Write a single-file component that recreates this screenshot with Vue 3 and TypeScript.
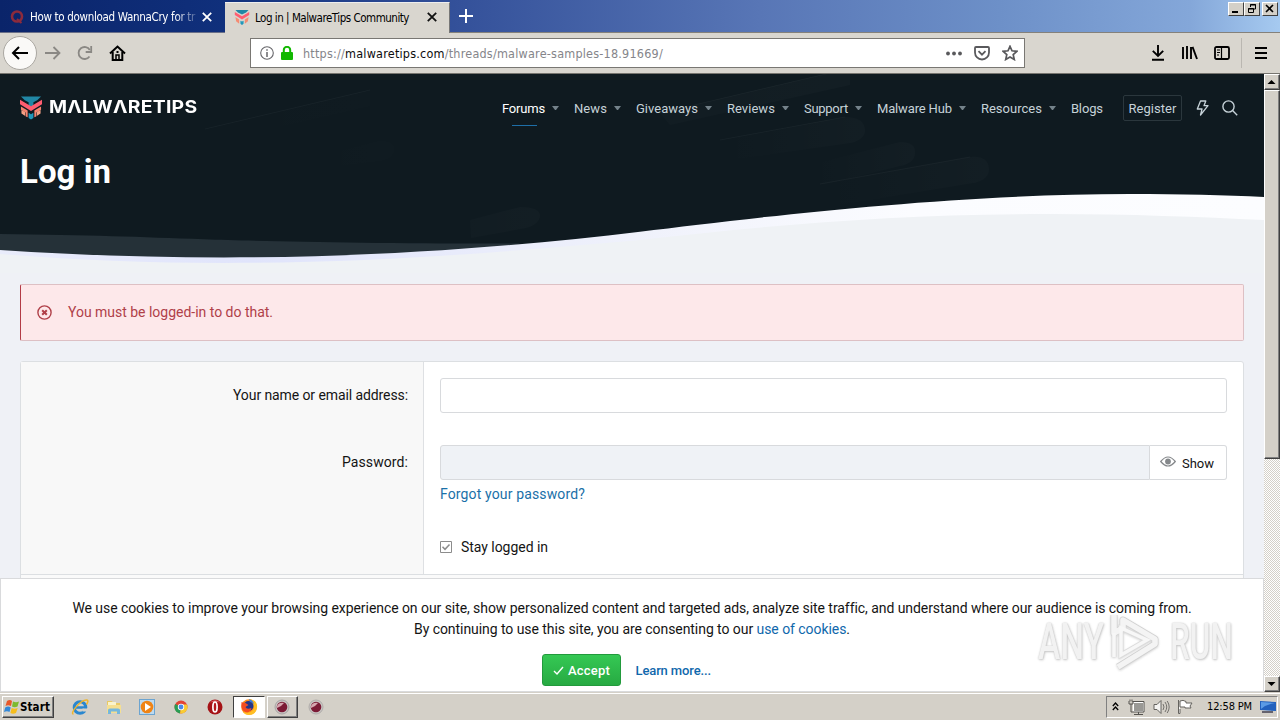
<script setup lang="ts">
import { ref, type Directive } from 'vue'

interface NavItem { label: string; width: number; menu: boolean; active?: boolean }

const nav: NavItem[] = [
  { label: 'Forums', width: 43, menu: true, active: true },
  { label: 'News', width: 33, menu: true },
  { label: 'Giveaways', width: 62, menu: true },
  { label: 'Reviews', width: 48, menu: true },
  { label: 'Support', width: 44, menu: true },
  { label: 'Malware Hub', width: 75, menu: true },
  { label: 'Resources', width: 61, menu: true },
  { label: 'Blogs', width: 32, menu: false },
]
const login = ref('')
const password = ref('')

// Tracks a label out so that it spans the given number of pixels.
const vFit: Directive<HTMLElement, number> = {
  mounted(el, binding) {
    const count = (el.textContent ?? '').length
    const natural = el.getBoundingClientRect().width
    if (count > 0) el.style.letterSpacing = `${(binding.value - natural) / count}px`
  },
}
</script>

<template>
  <div class="screen">
    <header class="titlebar">
      <div class="tab idle">
        <svg class="fav" width="16" height="16" viewBox="0 0 16 16"><circle cx="8" cy="7.500" r="5" fill="none" stroke="#8c2b3c" stroke-width="2.600"/><path d="M8 10l4.500 4" stroke="#8c2b3c" stroke-width="2"/></svg>
        <div class="tab-clip"><span v-fit="165" class="tab-text">How to download WannaCry for tr</span></div>
        <svg class="close" width="10" height="10" viewBox="0 0 10 10"><path d="M.8.8l8.400 8.400M9.200.8L.8 9.200" stroke="#fff" stroke-width="1.800"/></svg>
      </div>
      <div class="tab current">
        <svg class="fav" width="14" height="15" viewBox="0 0 23 24"><path d="M1 0h21l-4 4-6.500 3L5 4z" fill="#2187a5"/><path d="M0 3l11.500 7L23 3v5l-11.500 7L0 8z" fill="#ff5d70"/><path d="M1 11l6 4v7l-5-4zM22 11l-6 4v7l5-4z" fill="#f58b72"/><path d="M9 17l2.500 1.500L14 17v5l-2.500 2L9 22z" fill="#2198bb"/></svg>
        <div class="tab-clip"><span v-fit="154" class="tab-text">Log in | MalwareTips Community</span></div>
        <svg class="close" width="10" height="10" viewBox="0 0 10 10"><path d="M.8.8l8.400 8.400M9.200.8L.8 9.200" stroke="#111" stroke-width="1.800"/></svg>
      </div>
      <svg class="plus" width="14" height="14" viewBox="0 0 14 14"><path d="M7 0v14M0 7h14" stroke="#fff" stroke-width="2"/></svg>
      <div class="win-buttons">
        <i><svg width="14" height="12" viewBox="0 0 14 12"><path d="M3 9h6" stroke="#000" stroke-width="2"/></svg></i>
        <i><svg width="14" height="12" viewBox="0 0 14 12"><path d="M5.500 4V1.500h5v4.500H8.500M5 2h6M3.500 5.500h5v4h-5zM3 6h6" fill="none" stroke="#000"/></svg></i>
        <i class="x"><svg width="14" height="12" viewBox="0 0 14 12"><path d="M3 2l7 7M10 2L3 9" stroke="#000" stroke-width="1.600"/></svg></i>
      </div>
    </header>

    <div class="toolbar">
      <div class="back"><svg width="18" height="14" viewBox="0 0 18 14"><path d="M17 7H2M8 1L2 7l6 6" fill="none" stroke="#000" stroke-width="2"/></svg></div>
      <svg class="fwd" width="16" height="14" viewBox="0 0 16 14"><path d="M0 7h14M8.500 1l6 6-6 6" fill="none" stroke="#8a8884" stroke-width="1.800"/></svg>
      <svg class="reload" width="16" height="16" viewBox="0 0 16 16"><path d="M12.500 11.500A6 6 0 1 1 12.800 5" fill="none" stroke="#8a8884" stroke-width="1.800"/><path d="M14.200 1v6H8.700" fill="none" stroke="#8a8884" stroke-width="1.800"/></svg>
      <svg class="home" width="17" height="16" viewBox="0 0 17 16"><path d="M1 8.500l7.500-7 7.500 7" fill="none" stroke="#000" stroke-width="2"/><path d="M3.700 7v8h9.600V7" fill="none" stroke="#000" stroke-width="2"/><path d="M7 15v-5h3v5" fill="none" stroke="#000" stroke-width="1.500"/><path d="M7.500 6h2v2h-2z"/></svg>
      <div class="urlbar">
        <svg class="info" width="14" height="14" viewBox="0 0 14 14"><circle cx="7" cy="7" r="6.300" fill="none" stroke="#66666a" stroke-width="1.100"/><path d="M7 6v5M7 3.200v1.600" stroke="#66666a" stroke-width="1.500"/></svg>
        <svg class="lock" width="12" height="14" viewBox="0 0 12 14"><path d="M2.800 7V4a3.200 3.200 0 0 1 6.400 0v3" fill="none" stroke="#12b800" stroke-width="2"/><rect y="6" width="12" height="8" rx="1" fill="#12b800"/></svg>
        <span v-fit="360" class="url">https://<b>malwaretips.com</b>/threads/malware-samples-18.91669/</span>
        <svg class="dots" width="16" height="5" viewBox="0 0 16 5"><g fill="#59595c"><circle cx="2" cy="2.500" r="1.900"/><circle cx="8" cy="2.500" r="1.900"/><circle cx="14" cy="2.500" r="1.900"/></g></svg>
        <svg class="pocket" width="16" height="15" viewBox="0 0 16 15"><path d="M2 1h12q1 0 1 1v4.500a7 7 0 0 1-14 0V2q0-1 1-1z" fill="none" stroke="#59595c" stroke-width="1.800"/><path d="M4.500 5.200L8 8.700l3.500-3.500" fill="none" stroke="#59595c" stroke-width="1.800"/></svg>
        <svg class="star" width="16" height="16" viewBox="0 0 16 16"><path d="M8 1.300l2 4.500 4.900.5-3.700 3.300 1.100 4.900L8 12l-4.300 2.500 1.100-4.900L1.100 6.300 6 5.800z" fill="none" stroke="#59595c" stroke-width="1.700"/></svg>
      </div>
      <svg class="download" width="14" height="16" viewBox="0 0 14 16"><path d="M7 0v10.500M1.800 5.800L7 11l5.200-5.200M1 14.800h12" fill="none" stroke="#000" stroke-width="1.900"/></svg>
      <svg class="library" width="16" height="14" viewBox="0 0 16 14"><path d="M1 1v12M5 0v13M9 1v12M10.500.8L15 13" fill="none" stroke="#000" stroke-width="1.900"/></svg>
      <svg class="sidebar" width="16" height="14" viewBox="0 0 16 14"><rect x="1" y="1" width="14" height="12" rx="1.500" fill="none" stroke="#000" stroke-width="1.800"/><path d="M7.500 1v12M3 4h3M3 6.500h3M3 9h2" stroke="#000" stroke-width="1.200"/></svg>
      <i class="divider"></i>
      <svg class="menu" width="12" height="12" viewBox="0 0 12 12"><path d="M0 1h12M0 6h12M0 11h12" stroke="#000" stroke-width="2"/></svg>
    </div>

    <div class="viewport">
      <main class="page">
        <section class="hero">
          <svg class="backdrop" width="1264" height="200" viewBox="0 73 1264 200">
            <defs>
              <linearGradient id="crest" x1="0" x2="1"><stop offset="0" stop-color="#e9ecfb"/><stop offset=".2" stop-color="#e0e4fb"/><stop offset=".5" stop-color="#eff1fb"/><stop offset=".72" stop-color="#fbfcff"/><stop offset="1" stop-color="#fcfdff"/></linearGradient>
              <linearGradient id="streak" x1="0" x2="1"><stop offset="0" stop-color="#fff" stop-opacity="0"/><stop offset="1" stop-color="#fff" stop-opacity=".018"/></linearGradient>
            </defs>
            <rect y="73" width="1264" height="200" fill="#0f1a20"/>
            <g fill="url(#streak)">
              <path d="M205 129L370 90v16L215 142zM660 113L830 73h20v12L670 125z"/>
              <path d="M720 140l125-23q20 0 20 14-1 9-15 12l-112 16z"/>
              <path d="M810 165l90-23q16 0 15 11 0 10-15 13l-90 22z"/>
              <path d="M820 184l150-27q18-2 19 12 0 11-16 14l-140 23z"/>
              <path d="M315 157l64-16q16 0 15 9-1 9-15 11l-55 7zM470 220l50-13q19 0 20 8 0 9-14 13l-55 10z"/>
            </g>
            <g stroke="#fff" stroke-opacity=".035" fill="none"><path d="M205 129L370 90M660 113L830 73M720 140l125-23M820 184l150-27"/></g>
            <path d="M0 234C90 235 140 237 204 239.300S400 244 520 243.500L470 262H0z" fill="#253138"/>
            <path d="M0 250C75 255 150 257.500 224 257.500C380 257.500 520 246 640 231.700C760 217 950 194 1130 194C1180 194 1225 195 1264 197V273H0z" fill="url(#crest)"/>
            <path d="M0 254C75 260 150 263 224 263C380 263 500 252 640 240C780 224 900 214 1050 214C1130 214 1200 217 1264 220V273H0z" fill="#eff2f5"/>
          </svg>
          <div class="nav">
            <svg class="mark" width="22" height="24" viewBox="0 0 23 24"><path d="M1 0h21l-4 4-4 2v4h-5V6L5 4z" fill="#2187a5"/><path d="M0 3.500l11.500 6.800L23 3.500v4.600l-11.500 7L0 8.100z" fill="#ff5d70"/><path d="M1 10.500l7 4v7.300l-2-1v-4l-5-3zM22 10.500l-7 4v7.300l2-1v-4l5-3z" fill="#f5826f"/><path d="M1.500 14l4 2.300v4l-4-2.500zM21.500 14l-4 2.300v4l4-2.500z" fill="#f5a083"/><path d="M9 17l2.500 1.500L14 17v5.500L11.500 24 9 22.500z" fill="#2198bb"/></svg>
            <div class="logo"><span v-fit="148">MΛLWΛRETIPS</span></div>
            <nav>
              <a v-for="item in nav" :key="item.label" :class="{ active: item.active }">
                <span v-fit="item.width">{{ item.label }}</span>
                <i v-if="item.menu" class="caret"></i>
              </a>
            </nav>
            <a class="register"><span v-fit="48">Register</span></a>
            <svg class="bolt" width="13" height="16" viewBox="0 0 13 16"><path d="M4.500 1h5.300L8 5.700h4L4.500 15 6 9H1.300z" fill="none" stroke="#c6d2d8" stroke-width="1.300" stroke-linejoin="round"/></svg>
            <svg class="search" width="16" height="16" viewBox="0 0 16 16"><circle cx="6.500" cy="6.500" r="5.600" fill="none" stroke="#c6d2d8" stroke-width="1.400"/><path d="M10.600 10.600L15.200 15.200" stroke="#c6d2d8" stroke-width="1.400"/></svg>
          </div>
          <h1><span v-fit="91">Log in</span></h1>
        </section>

        <div class="error">
          <svg width="15" height="15" viewBox="0 0 15 15"><circle cx="7.500" cy="7.500" r="6.600" fill="none" stroke="#b04049" stroke-width="1.400"/><path d="M5.200 5.200l4.600 4.600M9.800 5.200L5.200 9.800" stroke="#b04049" stroke-width="2"/></svg>
          <span v-fit="205">You must be logged-in to do that.</span>
        </div>

        <form class="form" @submit.prevent>
          <div class="row">
            <label><span v-fit="175">Your name or email address:</span></label>
            <div class="field"><input v-model="login" class="input" type="text" /></div>
          </div>
          <div class="row second">
            <label><span v-fit="66">Password:</span></label>
            <div class="field">
              <div class="group">
                <input v-model="password" class="input pass" type="password" />
                <button type="button" class="show">
                  <svg width="16" height="11" viewBox="0 0 16 11"><path d="M.7 5.500Q8-3.500 15.300 5.500 8 14.500.7 5.500z" fill="none" stroke="#85888b" stroke-width="1.200"/><circle cx="8" cy="5.500" r="2.900" fill="#85888b"/></svg>
                  <span v-fit="32">Show</span>
                </button>
              </div>
              <a class="forgot"><span v-fit="145">Forgot your password?</span></a>
            </div>
          </div>
          <div class="row third">
            <label></label>
            <div class="field stay">
              <svg width="12" height="12" viewBox="0 0 12 12"><path d="M.5.5h11v11H.5z" fill="#fff" stroke="#8c8c8c"/><path d="M2.500 5.800l2.500 2.500 4.500-4.800" fill="none" stroke="#8c8c8c" stroke-width="1.500"/></svg>
              <span v-fit="87">Stay logged in</span>
            </div>
          </div>
          <div class="submit-row"></div>
        </form>

        <aside class="cookies">
          <p><span v-fit="1118">We use cookies to improve your browsing experience on our site, show personalized content and targeted ads, analyze site traffic, and understand where our audience is coming from.</span></p>
          <p><span v-fit="436">By continuing to use this site, you are consenting to our <a>use of cookies</a>.</span></p>
          <div class="actions">
            <button type="button" class="accept">
              <svg width="11" height="9" viewBox="0 0 11 9"><path d="M1 5l3 3 6-7" fill="none" stroke="#fff" stroke-width="1.400"/></svg>
              <span v-fit="42">Accept</span>
            </button>
            <a class="more"><span v-fit="75.5">Learn more...</span></a>
          </div>
        </aside>

        <div class="watermark">
          <div class="word any"><span>ANY</span></div>
          <svg width="56" height="60" viewBox="0 0 56 60"><path d="M5 3v18l9-5v-8l32 19v5L9 55" fill="none" stroke="#c9c9c9" stroke-width="7" stroke-linejoin="round"/><path d="M5 21v24M12 16v27L38 28z" fill="none" stroke="#d5d5d5" stroke-width="5"/><path d="M5 3v18l9-5v-8l32 19v5L9 55" fill="none" stroke="#f3f3f3" stroke-width="5.500" stroke-linejoin="round"/><path d="M5 21v24M12 16v27L38 28z" fill="none" stroke="#f6f6f6" stroke-width="3.500"/></svg>
          <div class="word run"><span>RUN</span></div>
        </div>
      </main>

      <div class="scroll">
        <i class="sbtn"><svg width="16" height="16" viewBox="0 0 16 16"><path d="M3.500 10L7.500 6l4 4z"/></svg></i>
        <i class="thumb"></i>
        <i class="track"></i>
        <i class="sbtn"><svg width="16" height="16" viewBox="0 0 16 16"><path d="M3.500 6l4 4 4-4z"/></svg></i>
      </div>
    </div>

    <footer class="taskbar">
      <div class="start">
        <svg width="16" height="16" viewBox="0 0 16 16"><path d="M3 2q3-2 5 0L7 7Q4 5.500 1.500 7z" fill="#e8582a"/><path d="M9 2.500q3 1.500 6 0L13.500 7.500Q10.500 9 8 7.500z" fill="#7dba2f"/><path d="M1.200 8.500q3-2 5.500 0L5.500 13Q3 11.500 0 13z" fill="#3388d8"/><path d="M7.700 9q3 1.500 6 0L12 14q-3 1.500-5.600 0z" fill="#f6bd1c"/></svg>
        <span v-fit="30">Start</span>
      </div>
      <div class="tasks">
        <div class="task"><svg width="18" height="18" viewBox="0 0 18 18"><circle cx="9" cy="9.500" r="5.800" fill="none" stroke="#2a87cf" stroke-width="3"/><path d="M4 9.500h10" stroke="#2a87cf" stroke-width="2.500"/><path d="M11.500 12h6" stroke="#d4d0c8" stroke-width="3"/><path d="M2.500 16C-2 16 10 1 16 2q2 .5-.5 4.500" fill="none" stroke="#efb52d" stroke-width="1.500"/></svg></div>
        <div class="task"><svg width="18" height="18" viewBox="0 0 18 18"><path d="M2 3h5l1 2h7v9H2z" fill="#e8c964"/><path d="M3 4h8v6H3z" fill="#f9f3cc"/><path d="M2 7h14v8H2z" fill="#f5df91"/><path d="M3 16v-4q0-1.500 2-1.500h8q2 0 2 1.500v4h-3v-2.500H6V16z" fill="#75b7dd"/></svg></div>
        <div class="task"><svg width="18" height="18" viewBox="0 0 18 18"><rect x="1.500" y="1.500" width="15" height="15" fill="#bddaf0" stroke="#6ca4d0"/><circle cx="9" cy="9" r="6.300" fill="#ef8416"/><path d="M7 5l6 4-6 4z" fill="#fff"/></svg></div>
        <div class="task"><svg width="16" height="16" viewBox="0 0 16 16"><circle cx="8" cy="8" r="6.500" fill="#e34436"/><path d="M8 8L2.200 5A6.500 6.500 0 0 0 7 14.500z" fill="#299d54"/><path d="M8 8l-1 6.500A6.500 6.500 0 0 0 14 5.500H8z" fill="#f9cc32"/><circle cx="8" cy="8" r="3.200" fill="#fff"/><circle cx="8" cy="8" r="2.400" fill="#4b89e8"/></svg></div>
        <div class="task"><svg width="16" height="16" viewBox="0 0 16 16"><circle cx="8" cy="8" r="7.500" fill="#a51216"/><path d="M3 3.500Q8-1 13 3.500 8 2 3 3.500z" fill="#d9575a"/><ellipse cx="8" cy="8" rx="2.100" ry="5" fill="#b5181c" stroke="#fff" stroke-width="1.700"/></svg></div>
        <div class="task pressed"><svg width="18" height="18" viewBox="0 0 18 18"><circle cx="9" cy="9" r="7.800" fill="#ff8b18"/><path d="M9 1q9 1 8 9-1 7-8 7-4 0-6-3 7 2 10-2 2-3-1-6z" fill="#ffbf24"/><circle cx="8.500" cy="8" r="5" fill="#253789"/><path d="M1.500 4q2 1 4 1l3 2-3 2q1 3 6 1-1 5-6 4-5-2-4-10z" fill="#f34b21"/><path d="M9 1q4 1 5 5-2-2-4-2z" fill="#3a78d8"/></svg></div>
        <div class="task raised"><svg width="16" height="16" viewBox="0 0 16 16"><circle cx="8" cy="8" r="7" fill="#c8c5c3" stroke="#a8a4a4"/><circle cx="8" cy="8" r="5.300" fill="#7c1b36"/><path d="M3 7q2-4 7-3-3 4-7 5z" fill="#d6a7b0"/></svg></div>
        <div class="task"><svg width="16" height="16" viewBox="0 0 16 16"><circle cx="8" cy="8" r="7" fill="#c8c5c3" stroke="#b0acaa"/><circle cx="8" cy="8" r="5.300" fill="#7c1b36"/><path d="M3 7q2-4 7-3-3 4-7 5z" fill="#d6a7b0"/></svg></div>
      </div>
      <div class="tray">
        <svg class="chev" width="7" height="9" viewBox="0 0 7 9"><path d="M.8 4l2.700-3 2.700 3M.8 8l2.700-3 2.700 3" fill="none" stroke="#000" stroke-width="1.300"/></svg>
        <svg class="net" width="17" height="16" viewBox="0 0 17 16"><path d="M5.500 3.500h10v9h-10z" fill="#9a9995" stroke="#fff"/><path d="M4.500 2.500h11.500v10.500h-10M6 15.500h9M10.500 13v2M1 2v3h4V2M2 .5v2M4 .5v2M3 5v8h3" fill="none" stroke="#55534f"/></svg>
        <svg class="sound" width="17" height="16" viewBox="0 0 17 16"><path d="M1 5.500h3L8 1.500v13l-4-4H1z" fill="#f4f3f1" stroke="#65635f"/><path d="M10 5q2 3 0 6M12 3q3.500 5 0 10M14.200 2q4 6 0 12" fill="none" stroke="#74726e"/></svg>
        <svg class="flag" width="17" height="15" viewBox="0 0 17 15"><path d="M1.500 1v13.500h1.500V10" fill="#fff" stroke="#65635f"/><path d="M3 2q3-1.500 6 .5V4h6l-2 3 1 2H8V8H3z" fill="#fff" stroke="#65635f"/></svg>
        <span v-fit="45" class="clock">12:58 PM</span>
        <svg class="desk" width="16" height="14" viewBox="0 0 16 14"><path d="M0 1l16 1v9L0 10z" fill="#2261bd"/><path d="M1 2l14 1q-8 1-14 6z" fill="#5b9be5"/><path d="M2 12h11" stroke="#403f50" stroke-width="1.500"/></svg>
      </div>
    </footer>
  </div>
</template>

<style>
body { margin: 0; overflow: hidden; }
</style>

<style scoped>
* { box-sizing: border-box; }
svg { display: block; flex: none; }
span { display: inline-block; white-space: nowrap; }
i { display: block; }
button { margin: 0; padding: 0; font: inherit; }
.screen { width: 1280px; height: 720px; display: flex; flex-direction: column; overflow: hidden; background: #eff2f6; font-family: Roboto, "Liberation Sans", sans-serif; }

.titlebar { height: 33px; flex: none; display: flex; background: linear-gradient(90deg, #0a246a 0, #10307c 225px, #34519a 460px, #5876b6 760px, #6d90c8 1000px, #84a7d9 1190px, #a6caf0 1280px); border-bottom: 1px solid #84817b; font-family: "DejaVu Sans Condensed", "DejaVu Sans", sans-serif; font-size: 11.500px; }
.tab { display: flex; align-items: center; height: 33px; width: 225px; }
.tab.idle { color: #fff; border-bottom: 1px solid #696f88; padding: 2px 0 0 9px; }
.tab.current { margin-top: 2px; height: 31px; width: 225px; padding-left: 9px; background: #d9d6cf; border-right: 1px solid #777; border-top: 1px solid #eee; color: #000; }
.tab .fav { width: 16px; }
.current .fav { margin-top: -2px; }
.current .close { margin-top: -2px; }
.idle .tab-clip { margin-left: 5px; width: 166px; mask-image: linear-gradient(90deg, #000 145px, transparent 172px); }
.current .tab-clip { margin: -1px 0 0 5px; width: 166px; }
.tab-text { line-height: 18px; }
.tab .close { margin-left: 6px; }
.plus { margin: 9px 0 0 9px; }
.win-buttons { margin: 2px 2px 0 auto; display: flex; }
.win-buttons i { width: 16px; height: 14px; background: #d4d0c8; border: 1px solid #fff; border-right-color: #404040; border-bottom-color: #404040; }
.win-buttons .x { margin-left: 2px; }

.toolbar { height: 41px; flex: none; display: flex; align-items: center; background: #d9d6cf; border-bottom: 1px solid #76746f; }
.back { width: 34px; height: 34px; margin-left: 3px; border-radius: 50%; border: 1px solid #aaa7a1; background: #faf9f7; display: flex; align-items: center; justify-content: center; }
.fwd { margin-left: 8px; }
.reload { margin-left: 16px; }
.home { margin-left: 16px; }
.urlbar { width: 775px; height: 30px; margin-left: 124px; padding: 0 6px 0 9px; display: flex; align-items: center; background: #fff; border: 1px solid #797773; }
.lock { margin-left: 7px; }
.url { margin: 1px 0 0 10px; font-family: "DejaVu Sans Condensed", "DejaVu Sans", sans-serif; font-size: 12.500px; line-height: 18px; color: #85858a; }
.url b { font-weight: 400; color: #0c0c0d; }
.dots { margin-left: auto; }
.pocket { margin-left: 12px; }
.star { margin-left: 12px; }
.download { margin-left: 126px; }
.library { margin-left: 17px; }
.sidebar { margin-left: 16px; }
.divider { width: 1px; height: 30px; margin-left: 11px; background: #bab7b1; }
.menu { margin-left: 13px; }

.viewport { height: 618px; flex: none; display: flex; }
.page { position: relative; width: 1264px; overflow: hidden; background: #eff1f6; font-size: 14px; color: #141414; }
.hero { position: relative; height: 210px; }
.backdrop { position: absolute; left: 0; top: -1px; }
.nav { position: relative; display: flex; height: 70px; align-items: center; padding-left: 20px; }
.mark { margin-top: -2px; }
.logo { margin: -4px 0 0 7px; width: 149px; color: #fff; font: 700 17px/20px Inter, "DejaVu Sans", sans-serif; transform: scaleX(1.14); transform-origin: left; }
nav { display: flex; gap: 15.300px; margin: -2px 0 0 304px; }
nav a { position: relative; display: flex; align-items: center; gap: 6.700px; height: 34px; font-size: 13px; color: #c6d2d8; }
nav a.active { color: #fff; }
nav a.active::after { content: ""; position: absolute; left: 10px; bottom: -1px; width: 25px; height: 1px; background: #1e6fa8; }
.caret { width: 7px; border: 3px solid transparent; border-top: 4px solid #74828a; border-bottom: 0; }
.register { display: flex; align-items: center; justify-content: center; width: 59px; height: 26px; margin: -2px 0 0 20px; border: 1px solid #2b373d; border-radius: 2px; font-size: 13px; color: #c6d2d8; }
.bolt { margin: -3px 0 0 14px; }
.search { margin: -3px 0 0 13px; }
h1 { position: relative; margin: 8px 0 0 20px; font-size: 33px; line-height: 40px; font-weight: 700; color: #fff; }

.error { height: 57px; margin: 0 20px; display: flex; align-items: center; padding-left: 16px; background: #fde8ea; border: 1px solid #ddc0c4; border-left-color: #b33b46; border-radius: 2px; color: #b04049; }
.error span { margin: -2px 0 0 16px; }
.form { margin: 20px 20px 0; border: 1px solid #dcdfe2; border-radius: 3px; background: #fff; }
.row { display: flex; height: 67px; }
.row label { width: 403px; flex: none; border-right: 1px solid #dee0e3; background: #f8f8f8; text-align: right; padding: 25px 15px 0 0; line-height: 17px; }
.field { flex: 1; padding: 16px 16px 0; }
.input { display: block; width: 100%; height: 35px; padding: 0 8px; border: 1px solid #d8dadd; border-radius: 3px; background: #fff; outline: 0; font: 14px Roboto, sans-serif; }
.second { height: 100px; }
.group { display: flex; }
.pass { flex: 1; width: auto; background: #eff2f6; border-radius: 3px 0 0 3px; }
.show { width: 77px; height: 35px; display: flex; align-items: center; padding-left: 10px; border: 1px solid #d8dadd; border-left: 0; border-radius: 0 3px 3px 0; background: #fff; font-size: 13px; color: #141414; }
.show svg { margin-top: -2px; }
.show span { margin: 2px 0 0 6px; }
.forgot { display: block; margin-top: 6px; line-height: 17px; color: #1a70a8; }
.third { height: 45px; }
.stay { display: flex; align-items: center; padding-top: 0; padding-bottom: 9px; }
.stay span { margin-left: 9px; }
.submit-row { height: 60px; border-top: 1px solid #dcdfe2; background: #fafafa; }

.cookies { position: absolute; left: 0; bottom: 0; width: 1264px; height: 114px; padding-top: 19px; border: 1px solid #d9dadc; background: #fff; text-align: center; }
.cookies p { margin: 0; height: 21px; line-height: 21px; }
.cookies a { color: #1068ac; }
.actions { display: flex; margin: 14px 0 0 541px; align-items: center; font-size: 13px; }
.accept { width: 79px; height: 32px; display: flex; align-items: center; padding-left: 10px; border: 1px solid #229a3c; border-radius: 3px; background: linear-gradient(#35c854, #27aa42); color: #fff; font-weight: 500; }
.accept span { margin-left: 4px; }
.more { margin-left: 14.500px; font-weight: 500; }

.watermark { position: absolute; left: 1038px; top: 538px; display: flex; align-items: center; font: 500 50px/60px Roboto, sans-serif; color: #f0f0f0; text-shadow: 0 0 2px #bbb, 1px 1px 3px #bbb; opacity: .85; }
.watermark svg { margin-left: 6px; filter: drop-shadow(0 1px 1px #ccc); }
.word { width: 65px; transform-origin: left; }
.any { transform: scaleX(.67); }
.run { margin-left: 5px; transform: scaleX(.63); }

.scroll { width: 16px; display: flex; flex-direction: column; background: repeating-conic-gradient(#fff 0 25%, #d4d0c8 0 50%) 0 0 / 2px 2px; }
.sbtn { width: 16px; height: 16px; flex: none; background: #d4d0c8; border: 1px solid #fff; border-right-color: #404040; border-bottom-color: #404040; box-shadow: inset -1px -1px #808080; overflow: hidden; }
.sbtn svg { margin: -1px; }
.thumb { height: 369px; background: #d4d0c8; border: 1px solid #fff; border-right-color: #404040; border-bottom-color: #404040; box-shadow: inset -1px -1px #808080; }
.track { flex: 1; }

.taskbar { height: 28px; flex: none; display: flex; align-items: center; border-top: 1px solid #d4d0c8; box-shadow: inset 0 1px #fff; background: #d4d0c8; font-family: "DejaVu Sans Condensed", "DejaVu Sans", sans-serif; font-size: 11px; color: #000; }
.start { width: 52px; height: 22px; margin: 1px 0 0 2px; display: flex; align-items: center; padding-left: 1px; border: 1px solid #fff; border-right-color: #404040; border-bottom-color: #404040; box-shadow: inset -1px -1px #808080; font-size: 11.500px; font-weight: 700; }
.start span { line-height: 16px; }
.tasks { display: flex; margin-left: 10px; gap: 2px; }
.task { width: 31.750px; height: 22px; display: flex; align-items: center; justify-content: center; }
.pressed { background: #fff; border: 1px solid #404040; border-right-color: #fff; border-bottom-color: #fff; }
.raised { border: 1px solid #fff; border-right-color: #404040; border-bottom-color: #404040; box-shadow: inset -1px -1px #808080; }
.tray { width: 172px; height: 22px; margin-left: auto; margin-right: 2px; display: flex; align-items: center; padding-left: 5px; border: 1px solid #808080; border-right-color: #fff; border-bottom-color: #fff; }
.net { margin-left: 9px; }
.sound { margin-left: 8px; }
.flag { margin-left: 7px; }
.clock { margin-left: 13px; }
.desk { margin-left: 8px; }
</style>
